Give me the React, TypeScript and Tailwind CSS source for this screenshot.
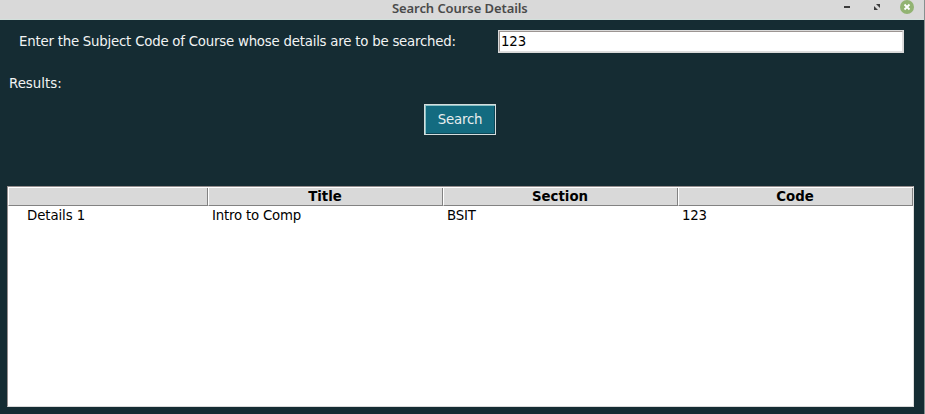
import React from "react";

const columns = ["Title", "Section", "Code"];
const values = ["Intro to Comp", "BSIT", "123"];
const headerCell =
  "h-[18px] border-r border-b border-[#828282] border-l border-l-white bg-[#d9d9d9] pr-px text-center font-bold leading-[17px]";

function TitleBar() {
  return (
    <header className="flex h-5 border-b border-[#d3e0dc] bg-[#d9d9d9]">
      <div className="w-[830px] shrink-0 pl-[392px] font-['Noto_Sans',sans-serif] text-[13px] leading-[17px] font-semibold tracking-[-0.08px] text-[#4a4a4a]">
        <span className="whitespace-nowrap">Search Course Details</span>
      </div>
      <svg width="94" height="19" viewBox="830 0 94 19" className="shrink-0">
        <path d="M844 6h6v2h-6z" fill="#3c3c3c" />
        <path d="M876 4h4v4zM874 6v4h4z" fill="#3c3c3c" />
        <circle cx="907" cy="7" r="7" fill="#92b372" />
        <path d="M904.5 4.5l5 5m0-5l-5 5" stroke="white" strokeWidth="1.8" />
      </svg>
    </header>
  );
}

export default function App() {
  return (
    <main className="h-[414px] w-[925px] overflow-hidden border-r border-[#86908f] bg-[#152c33] font-['DejaVu_Sans',sans-serif] text-[13.333px] text-black">
      <TitleBar />
      <section className="flex items-start pt-[10px] pl-[19px] text-[#f2f4f4]">
        <label htmlFor="code" className="w-[479px] leading-[23px] tracking-[-0.225px] whitespace-nowrap">
          Enter the Subject Code of Course whose details are to be searched:
        </label>
        <input
          id="code"
          defaultValue="123"
          className="h-[23px] w-[406px] border-2 border-t-[#9c9592] border-r-[#dedede] border-b-[#dedede] border-l-[#9c9592] bg-white pl-px tracking-[-0.15px] text-black outline-1 -outline-offset-1 outline-[#d9d9d9]"
        />
      </section>
      <div className="mt-[21px] pl-[9px] leading-[20px] text-[#f2f4f4]">Results:</div>
      <button className="mt-[10px] ml-[424px] block h-[31px] w-[72px] border border-[#d5dddd] bg-[#136b80] leading-[27px] tracking-[-0.2px] text-[#e8eeee] shadow-[inset_1px_1px_0_#8bc2c7,inset_-1px_-1px_0_#0c4656]">
        Search
      </button>
      <section className="mt-[51px] ml-[7px] h-[221px] w-[907px] border border-t-[#958e8e] border-r-[#dedede] border-b-[#d9d9d9] border-l-[#958e8e] bg-white pt-px">
        <div className="grid grid-cols-[200px_235px_235px_235px]">
          <div className={headerCell} />
          {columns.map((column) => (
            <div key={column} className={headerCell}>{column}</div>
          ))}
          <div className="pl-[19px] leading-[19px] tracking-[-0.1px]">Details 1</div>
          {values.map((value) => (
            <div key={value} className="pl-[4px] leading-[19px] tracking-[-0.2px]">{value}</div>
          ))}
        </div>
      </section>
    </main>
  );
}
